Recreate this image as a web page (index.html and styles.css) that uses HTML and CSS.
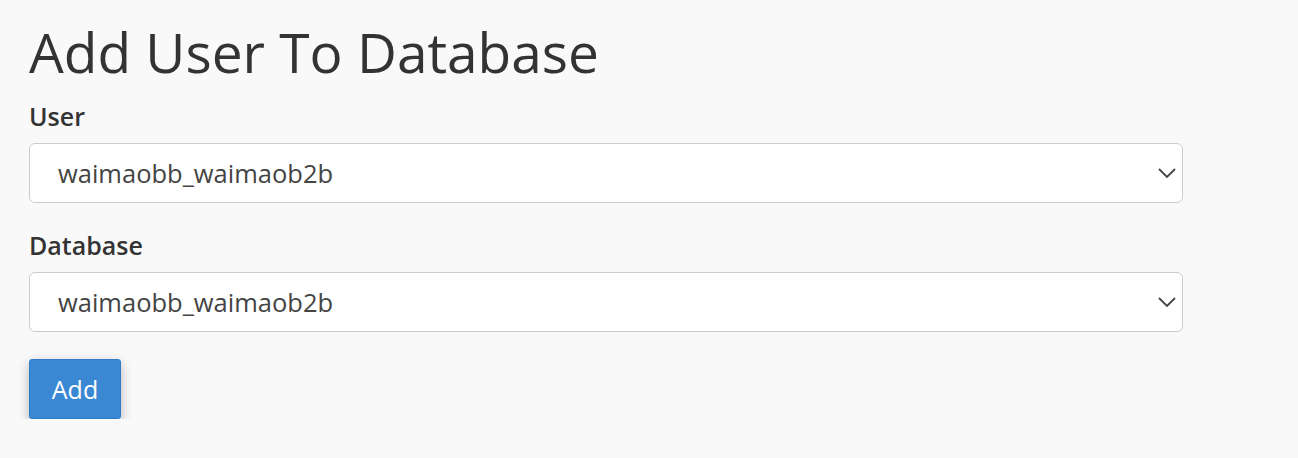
FILE: index.html
```html
<!DOCTYPE html>
<html lang="en">
<head>
    <meta charset="UTF-8">
    <title>Add User To Database</title>
    <link rel="stylesheet" href="styles.css">
</head>
<body>
    <div class="container">
        <h1>Add User To Database</h1>
        <form class="add-form">
            <div class="form-group">
                <label for="user">User</label>
                <div class="select-wrap">
                    <select id="user">
                        <option>waimaobb_waimaob2b</option>
                    </select>
                    <svg class="chevron" width="18" height="10" viewBox="0 0 18 10"><path d="M1 1l8 8 8-8" fill="none" stroke="#444" stroke-width="1.8"/></svg>
                </div>
            </div>
            <div class="form-group">
                <label for="db">Database</label>
                <div class="select-wrap">
                    <select id="db">
                        <option>waimaobb_waimaob2b</option>
                    </select>
                    <svg class="chevron" width="18" height="10" viewBox="0 0 18 10"><path d="M1 1l8 8 8-8" fill="none" stroke="#444" stroke-width="1.8"/></svg>
                </div>
            </div>
            <button type="button" class="btn-primary">Add</button>
        </form>
    </div>
</body>
</html>
```

FILE: styles.css
```css
* {
    margin: 0;
    padding: 0;
    box-sizing: border-box;
}
body {
    background: #f9f9f9;
    font-family: "Open Sans", sans-serif;
    color: #333;
}
.container {
    width: 1154px;
    margin-left: 29px;
    padding-top: 19px;
}
h1 {
    font-size: 55px;
    font-weight: 400;
    line-height: 66px;
    margin-bottom: 15px;
}
.form-group {
    margin-bottom: 26px;
}
label {
    display: block;
    font-size: 25px;
    font-weight: 600;
    line-height: 32px;
    margin-bottom: 11px;
}
.select-wrap {
    position: relative;
}
select {
    appearance: none;
    -webkit-appearance: none;
    width: 100%;
    height: 60px;
    padding: 0 28px;
    font-family: "Open Sans", sans-serif;
    font-size: 25.5px;
    color: #444;
    background: #fff;
    border: 1px solid #ccc;
    border-radius: 6px;
}
.chevron {
    position: absolute;
    right: 7px;
    top: 25px;
    pointer-events: none;
}
.form-group + .btn-primary {
    margin-top: 1px;
}
.btn-primary {
    background: #3a88d4;
    color: #fff;
    font-family: "Open Sans", sans-serif;
    font-size: 25px;
    width: 92px;
    height: 60px;
    border: 1px solid #2f7bc4;
    border-radius: 3px;
    box-shadow: 0 4px 12px rgba(0,0,0,0.28);
    cursor: pointer;
}
```
